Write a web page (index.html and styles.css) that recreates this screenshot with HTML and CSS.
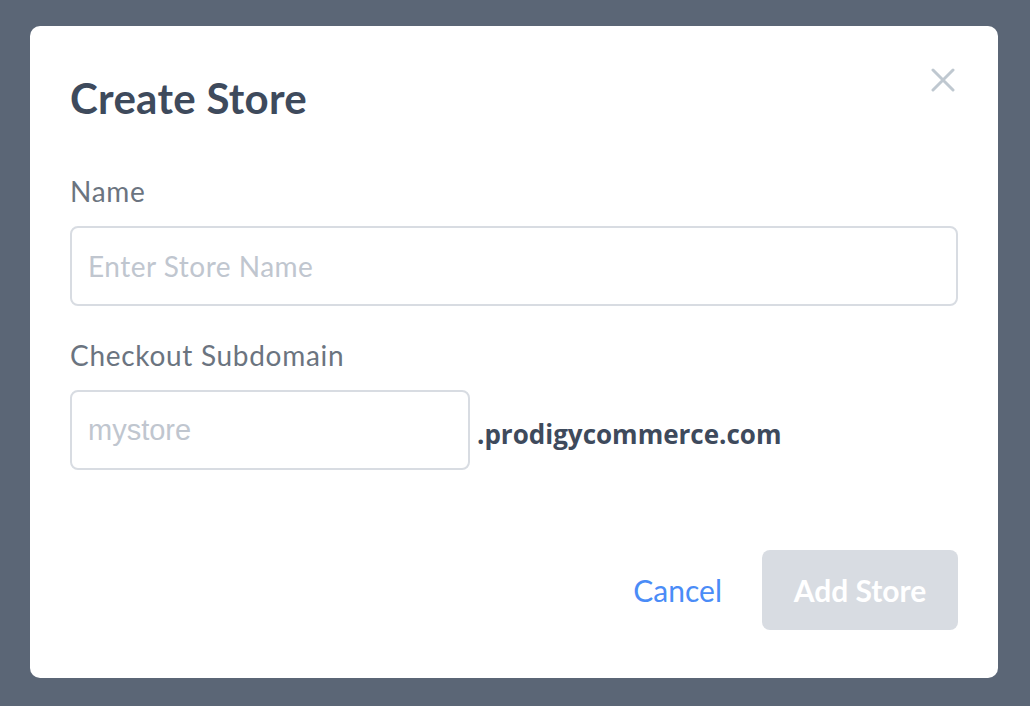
FILE: index.html
```html
<!DOCTYPE html>
<html>
<head>
<meta charset="utf-8">
<link rel="stylesheet" href="styles.css">
</head>
<body>
<div class="overlay">
  <div class="modal">
    <div class="modal-head">
      <h1 class="title">Create Store</h1>
      <button class="close" aria-label="Close">
        <svg width="24" height="24" viewBox="0 0 24 24"><path d="M2 2 L22 22 M22 2 L2 22" stroke="#bfc8d0" stroke-width="3" stroke-linecap="round"/></svg>
      </button>
    </div>
    <label class="label">Name</label>
    <input class="input input-full" placeholder="Enter Store Name">
    <label class="label label-sub">Checkout Subdomain</label>
    <div class="sub-row">
      <input class="input input-sub" placeholder="mystore">
      <span class="domain">.prodigycommerce.com</span>
    </div>
    <div class="actions">
      <button class="cancel">Cancel</button>
      <button class="add">Add Store</button>
    </div>
  </div>
</div>
</body>
</html>
```
FILE: styles.css
```css
html, body { margin: 0; padding: 0; }
body {
  background: #5b6676;
  font-family: "Lato", "Noto Sans", sans-serif;
  width: 1030px;
  height: 706px;
  overflow: hidden;
}
.overlay {
  padding: 26px 32px 28px 30px;
}
.modal {
  background: #fff;
  border-radius: 10px;
  height: 652px;
  box-sizing: border-box;
  padding: 0 40px 48px 40px;
  display: flex;
  flex-direction: column;
}
.modal-head {
  display: flex;
  justify-content: space-between;
  align-items: flex-start;
}
.title {
  margin: 0;
  padding-top: 48px;
  font-size: 42px;
  line-height: 48px;
  font-weight: 700;
  letter-spacing: 0.3px;
  color: #3e4a5c;
}
.close {
  margin-top: 42px;
  margin-right: 3px;
  border: 0;
  background: none;
  padding: 0;
  width: 24px;
  height: 24px;
}
.close svg { display: block; }
.label {
  display: block;
  margin-top: 53px;
  font-size: 28px;
  line-height: 32px;
  letter-spacing: 0.7px;
  color: #6b7480;
}
.label-sub { margin-top: 33px; }
.input {
  box-sizing: border-box;
  height: 80px;
  border: 2px solid #d8dce2;
  border-radius: 8px;
  padding: 0 16px;
  font-family: inherit;
  font-size: 28px;
  letter-spacing: 0.5px;
  color: #3e4a5c;
  outline: none;
  margin-top: 19px;
}
.input::placeholder { color: #c0c6cf; }
.input-full { width: 888px; }
.sub-row {
  display: flex;
  align-items: center;
  margin-top: 19px;
}
.sub-row .input { margin-top: 0; }
.input-sub {
  width: 400px;
  font-family: "Liberation Sans", "Open Sans", sans-serif;
  font-size: 29px;
  letter-spacing: 0;
}
.domain {
  margin-left: 7px;
  margin-top: 8px;
  font-family: "Open Sans", "Liberation Sans", sans-serif;
  font-weight: 700;
  font-size: 26px;
  color: #3e4a5c;
}
.actions {
  margin-top: auto;
  display: flex;
  justify-content: flex-end;
  align-items: center;
  gap: 40px;
}
.cancel {
  border: 0;
  background: none;
  padding: 0;
  font-family: inherit;
  font-size: 30px;
  color: #4a8cf7;
}
.add {
  border: 0;
  width: 196px;
  height: 80px;
  border-radius: 8px;
  background: #d8dce2;
  color: #fff;
  font-family: inherit;
  font-weight: 700;
  font-size: 30px;
}
```
